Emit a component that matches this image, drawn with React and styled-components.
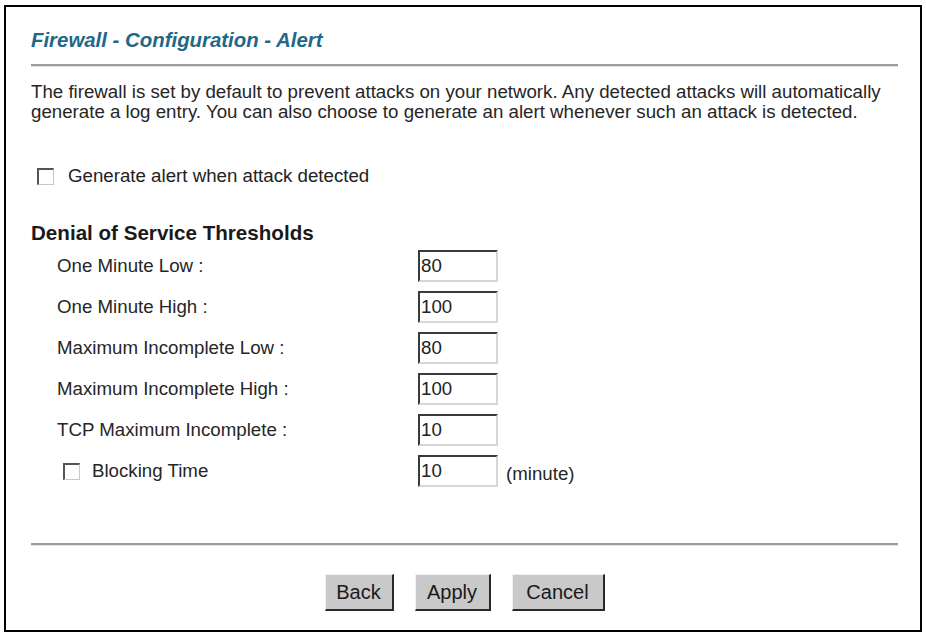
import React from 'react';
import styled, { createGlobalStyle } from 'styled-components';

const GlobalStyle = createGlobalStyle`
  html, body {
    margin: 0;
    padding: 0;
    background: #ffffff;
  }
  body {
    font-family: "Liberation Sans", Arial, sans-serif;
    color: #222222;
  }
`;

const Frame = styled.div`
  box-sizing: border-box;
  width: 918px;
  height: 627px;
  margin: 5px 0 0 4px;
  border: 2px solid #000000;
  padding: 21px 22px 0 25px;
  display: flex;
  flex-direction: column;
`;

const Title = styled.h1`
  margin: 0;
  font-size: 20.4px;
  line-height: 24px;
  font-weight: bold;
  font-style: italic;
  color: #1f6887;
`;

const Rule = styled.div`
  height: 2px;
  background: #9c9c9c;
  border-bottom: 1px solid #e2e2e2;
  margin-top: ${(p) => p.$top}px;
`;

const Intro = styled.p`
  margin: 15px 0 0 0;
  font-size: 18.7px;
  line-height: 20px;
  color: #262626;
`;

const CheckRow = styled.label`
  display: flex;
  align-items: center;
  height: 20px;
  margin: ${(p) => p.$top || 0}px 0 0 ${(p) => p.$indent}px;
  font-size: 18.7px;
`;

const Box = styled.span`
  box-sizing: border-box;
  width: 17px;
  height: 17px;
  margin-right: ${(p) => p.$gap}px;
  background: #ffffff;
  border-top: 2px solid #555555;
  border-left: 2px solid #555555;
  border-right: 1px solid #c8c8c8;
  border-bottom: 1px solid #c8c8c8;
`;

const Heading = styled.h2`
  margin: 35px 0 0 0;
  font-size: 20.6px;
  line-height: 24px;
  font-weight: bold;
  color: #1a1a1a;
`;

const Thresholds = styled.div`
  display: grid;
  grid-template-columns: 361px 80px auto;
  grid-auto-rows: 32px;
  row-gap: 9px;
  margin: 5px 0 0 26px;
  align-items: center;
  font-size: 18.7px;
  color: #262626;
`;

const Label = styled.span`
  line-height: 20px;
`;

const Field = styled.input`
  box-sizing: border-box;
  width: 80px;
  height: 32px;
  margin: 0;
  padding: 0 0 0 1px;
  font-family: "Liberation Sans", Arial, sans-serif;
  font-size: 18.7px;
  color: #222222;
  background: #ffffff;
  border-top: 2px solid #3a3a3a;
  border-left: 2px solid #3a3a3a;
  border-right: 2px solid #d6d6d6;
  border-bottom: 2px solid #d6d6d6;
  outline: none;
`;

const Unit = styled.span`
  margin-left: 8px;
  padding-top: 6px;
`;

const Buttons = styled.div`
  display: flex;
  justify-content: center;
  gap: 21px;
  margin-top: 28px;
`;

const Button = styled.button`
  box-sizing: border-box;
  width: ${(p) => p.$width}px;
  height: 37px;
  padding: 0;
  font-family: "Liberation Sans", Arial, sans-serif;
  font-size: 20px;
  color: #1a1a1a;
  background: #c9c9c9;
  border-top: 1px solid #f0f0f0;
  border-left: 1px solid #f0f0f0;
  border-right: 2px solid #2a2a2a;
  border-bottom: 2px solid #2a2a2a;
  cursor: pointer;
`;

const limits = [
  ['One Minute Low :', '80'],
  ['One Minute High :', '100'],
  ['Maximum Incomplete Low :', '80'],
  ['Maximum Incomplete High :', '100'],
  ['TCP Maximum Incomplete :', '10'],
];

export default function App() {
  return (
    <>
      <GlobalStyle />
      <Frame>
        <Title>Firewall - Configuration - Alert</Title>
        <Rule $top={12} />
        <Intro>
          The firewall is set by default to prevent attacks on your network. Any detected attacks will automatically
          generate a log entry. You can also choose to generate an alert whenever such an attack is detected.
        </Intro>
        <CheckRow $top={44} $indent={6}>
          <Box $gap={14} />
          Generate alert when attack detected
        </CheckRow>
        <Heading>Denial of Service Thresholds</Heading>
        <Thresholds>
          {limits.map(([name, value]) => (
            <React.Fragment key={name}>
              <Label>{name}</Label>
              <Field defaultValue={value} />
              <span />
            </React.Fragment>
          ))}
          <CheckRow $indent={6}>
            <Box $gap={12} />
            Blocking Time
          </CheckRow>
          <Field defaultValue="10" />
          <Unit>(minute)</Unit>
        </Thresholds>
        <Rule $top={56} />
        <Buttons>
          <Button $width={69}>Back</Button>
          <Button $width={76}>Apply</Button>
          <Button $width={93}>Cancel</Button>
        </Buttons>
      </Frame>
    </>
  );
}
